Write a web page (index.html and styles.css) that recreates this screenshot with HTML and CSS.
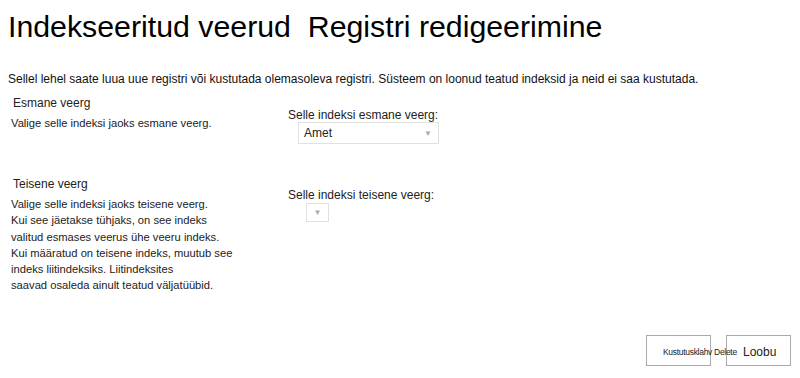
FILE: index.html
```html
<!DOCTYPE html>
<html lang="et">
<head>
    <meta charset="UTF-8">
    <title>Indekseeritud veerud</title>
    <link rel="stylesheet" href="styles.css">
</head>
<body>
    <h1 class="page-title">Indekseeritud veerud&nbsp; Registri redigeerimine</h1>
    <p class="intro">Sellel lehel saate luua uue registri või kustutada olemasoleva registri. Süsteem on loonud teatud indeksid ja neid ei saa kustutada.</p>

    <div class="section section-primary">
        <div class="section-info">
            <div class="section-title">Esmane veerg</div>
            <div class="section-desc">Valige selle indeksi jaoks esmane veerg.</div>
        </div>
        <div class="section-field">
            <label class="field-label">Selle indeksi esmane veerg:</label>
            <div class="select select-wide">
                <span class="select-value">Amet</span>
                <span class="select-arrow">&#9660;</span>
            </div>
        </div>
    </div>

    <div class="section section-secondary">
        <div class="section-info">
            <div class="section-title">Teisene veerg</div>
            <div class="section-desc">
                Valige selle indeksi jaoks teisene veerg.<br>
                Kui see jäetakse tühjaks, on see indeks<br>
                valitud esmases veerus ühe veeru indeks.<br>
                Kui määratud on teisene indeks, muutub see<br>
                indeks liitindeksiks. Liitindeksites<br>
                saavad osaleda ainult teatud väljatüübid.
            </div>
        </div>
        <div class="section-field">
            <label class="field-label">Selle indeksi teisene veerg:</label>
            <div class="select select-small">
                <span class="select-arrow">&#9660;</span>
            </div>
        </div>
    </div>

    <div class="actions">
        <button class="btn btn-delete">Kustutusklahv Delete</button>
        <button class="btn btn-cancel">Loobu</button>
    </div>
</body>
</html>
```

FILE: styles.css
```css
body {
    margin: 0;
    padding: 0 8px;
    font-family: 'Liberation Sans', Arial, sans-serif;
    color: #000;
    background: #fff;
    width: 784px;
    height: 378px;
    overflow: hidden;
}
.page-title {
    margin: 0;
    padding-top: 9px;
    font-size: 30.3px;
    font-weight: normal;
    line-height: 36px;
    white-space: nowrap;
}
.intro {
    margin: 26px 0 0;
    font-size: 12px;
    line-height: 16px;
    color: #111;
    white-space: nowrap;
}
.section {
    display: flex;
}
.section-info {
    width: 280px;
}
.section-primary {
    margin-top: 8px;
}
.section-secondary {
    margin-top: 32px;
}
.section-title {
    font-size: 12px;
    line-height: 16px;
    padding-left: 5px;
    color: #222;
}
.section-desc {
    margin-top: 4px;
    padding-left: 3px;
    font-size: 11.2px;
    line-height: 16.3px;
    color: #222;
}
.section-field {
    padding-top: 13px;
}
.section-secondary .section-field {
    padding-top: 12px;
}
.field-label {
    display: block;
    font-size: 12px;
    line-height: 14px;
    color: #222;
}
.select {
    margin-top: 0;
    border: 1px solid #e1e1e1;
    display: flex;
    align-items: center;
    box-sizing: border-box;
    height: 22px;
}
.select-wide {
    margin-left: 10px;
    width: 141px;
    padding: 0 6px 0 5px;
    justify-content: space-between;
}
.select-small {
    margin-top: 1px;
    margin-left: 18px;
    width: 23px;
    height: 19px;
    justify-content: center;
}
.select-value {
    font-size: 12px;
    color: #222;
}
.select-arrow {
    font-size: 8px;
    color: #aaa;
}
.actions {
    display: flex;
    justify-content: flex-end;
    gap: 15px;
    margin-top: 41px;
    padding-right: 1px;
}
.btn {
    width: 65px;
    height: 31px;
    border: 1px solid #ababab;
    background: transparent;
    font-family: 'Liberation Sans', Arial, sans-serif;
    padding: 4px 0 0;
    white-space: nowrap;
    color: #222;
}
.btn-delete {
    font-size: 8.5px;
    letter-spacing: -0.3px;
    text-align: left;
    padding-left: 16px;
    overflow: visible;
    position: relative;
    z-index: 1;
}
.btn-cancel {
    font-size: 12px;
    text-align: left;
    padding-left: 16px;
}
```
